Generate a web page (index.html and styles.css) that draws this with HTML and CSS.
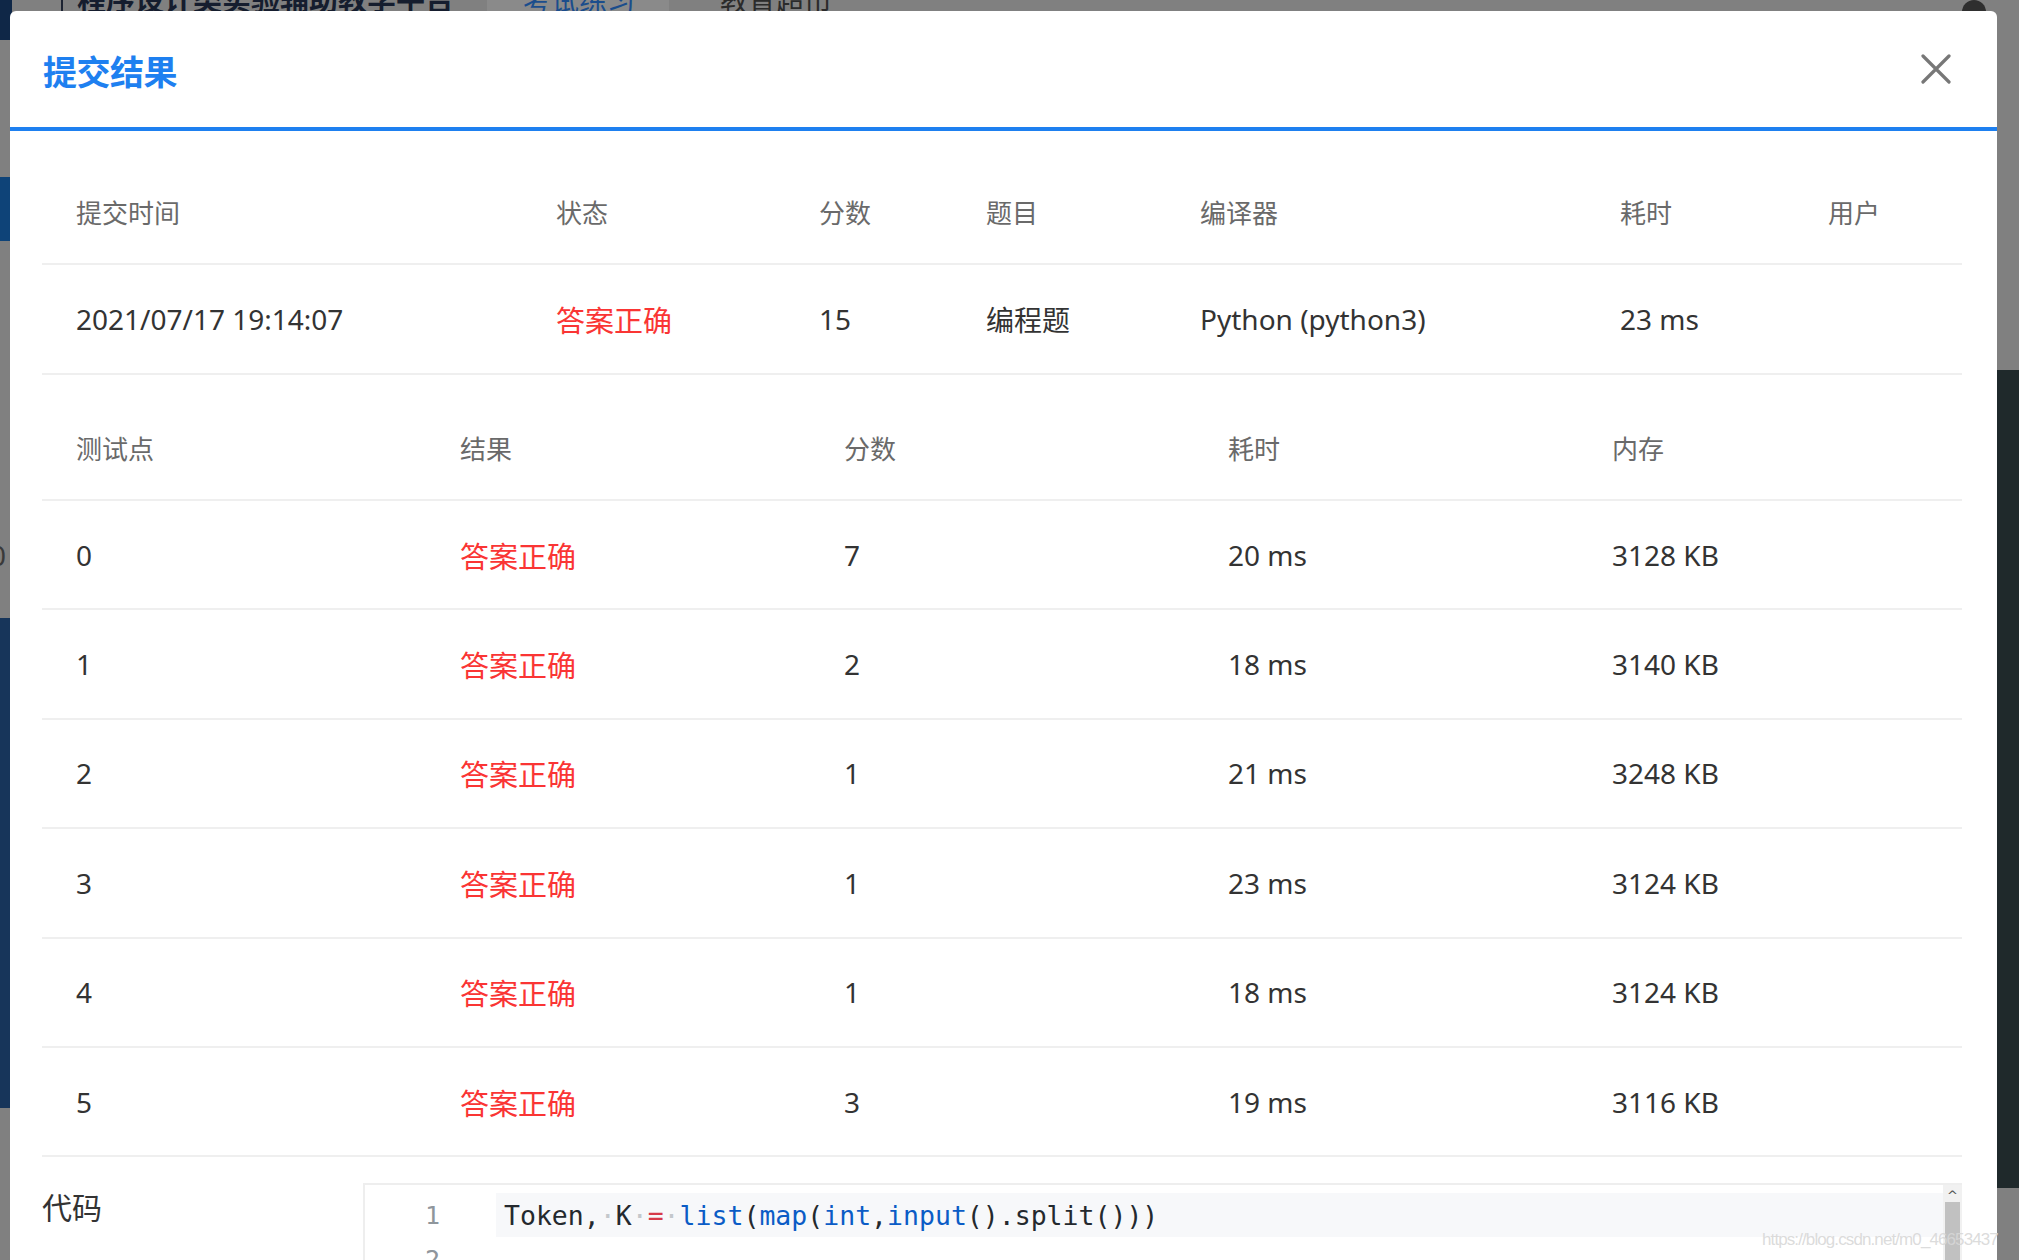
FILE: index.html
```html
<!DOCTYPE html>
<html lang="zh-CN">
<head>
<meta charset="utf-8">
<title>提交结果</title>
<link rel="stylesheet" href="styles.css">
</head>
<body>
<div class="backdrop">
  <div class="bg-topbar">
    <div class="bg-logo"></div>
    <div class="bg-sep"></div>
    <div class="bg-title">程序设计类实验辅助教学平台</div>
    <div class="bg-tab bg-tab-active">考试练习</div>
    <div class="bg-tab">教育超市</div>
    <div class="bg-avatar"></div>
  </div>
  <div class="bg-left-blue"></div>
  <div class="bg-left-char">0</div>
  <div class="bg-left-dark"></div>
  <div class="bg-right-dark"></div>
  <div class="watermark">https://blog.csdn.net/m0_46653437</div>
</div>

<div class="modal">
  <div class="modal-header">
    <h2 class="modal-title">提交结果</h2>
    <button class="close-btn" aria-label="关闭">
      <svg width="30" height="30" viewBox="0 0 30 30"><path d="M2 2 L28 28 M28 2 L2 28" stroke="#777" stroke-width="3.2" stroke-linecap="round" fill="none"/></svg>
    </button>
  </div>
  <div class="modal-body">
    <div class="table summary">
      <div class="row head">
        <div>提交时间</div><div>状态</div><div>分数</div><div>题目</div><div>编译器</div><div>耗时</div><div>用户</div>
      </div>
      <div class="row data">
        <div>2021/07/17 19:14:07</div><div class="ok">答案正确</div><div>15</div><div>编程题</div><div>Python (python3)</div><div>23 ms</div><div></div>
      </div>
    </div>

    <div class="table cases">
      <div class="row head">
        <div>测试点</div><div>结果</div><div>分数</div><div>耗时</div><div>内存</div>
      </div>
      <div class="row data"><div>0</div><div class="ok">答案正确</div><div>7</div><div>20 ms</div><div>3128 KB</div></div>
      <div class="row data"><div>1</div><div class="ok">答案正确</div><div>2</div><div>18 ms</div><div>3140 KB</div></div>
      <div class="row data"><div>2</div><div class="ok">答案正确</div><div>1</div><div>21 ms</div><div>3248 KB</div></div>
      <div class="row data"><div>3</div><div class="ok">答案正确</div><div>1</div><div>23 ms</div><div>3124 KB</div></div>
      <div class="row data"><div>4</div><div class="ok">答案正确</div><div>1</div><div>18 ms</div><div>3124 KB</div></div>
      <div class="row data"><div>5</div><div class="ok">答案正确</div><div>3</div><div>19 ms</div><div>3116 KB</div></div>
    </div>

    <div class="code-section">
      <div class="code-label">代码</div>
      <div class="code-box">
        <div class="code-lines">
          <div class="code-line active">
            <div class="gutter">1</div>
            <div class="code-text"><span class="id">Token,</span><span class="ws">·</span><span class="id">K</span><span class="ws">·</span><span class="op">=</span><span class="ws">·</span><span class="fn">list</span>(<span class="fn">map</span>(<span class="fn">int</span>,<span class="fn">input</span>().split()))</div>
          </div>
          <div class="code-line">
            <div class="gutter">2</div>
            <div class="code-text"></div>
          </div>
        </div>
        <div class="scrollbar">
          <div class="scroll-arrow">^</div>
          <div class="scroll-thumb"></div>
        </div>
      </div>
    </div>
  </div>
</div>
</body>
</html>
```

FILE: styles.css
```css
html, body {
  margin: 0;
  padding: 0;
  width: 2019px;
  height: 1260px;
  overflow: hidden;
}
body {
  position: relative;
  background: #808080;
  font-family: "Noto Sans", "Noto Sans CJK SC", sans-serif;
  color: #333;
}

/* dimmed page behind the dialog */
.backdrop {
  position: absolute;
  inset: 0;
  background: #808080;
}
.bg-topbar {
  position: absolute;
  left: 0;
  top: 0;
  width: 2019px;
  height: 40px;
}
.bg-logo {
  position: absolute;
  left: 0;
  top: 0;
  width: 12px;
  height: 40px;
  background: #0f2747;
}
.bg-sep {
  position: absolute;
  left: 61px;
  top: 0;
  width: 2px;
  height: 12px;
  background: #1c2332;
}
.bg-title {
  position: absolute;
  left: 77px;
  top: -16px;
  font-size: 29px;
  line-height: 29px;
  font-weight: 700;
  color: #151d2e;
  font-family: "Noto Sans CJK SC", sans-serif;
}
.bg-tab {
  position: absolute;
  top: -14px;
  left: 720px;
  font-size: 28px;
  line-height: 28px;
  color: #2b2b2b;
  font-family: "Noto Sans CJK SC", sans-serif;
}
.bg-tab-active {
  left: 487px;
  width: 182px;
  height: 26px;
  padding-left: 36px;
  box-sizing: border-box;
  background: #8a8a8a;
  color: #1b4d8c;
}
.bg-avatar {
  position: absolute;
  left: 1962px;
  top: 0;
  width: 24px;
  height: 26px;
  border-radius: 12px;
  background: #2f2f2f;
}
.bg-left-blue {
  position: absolute;
  left: 0;
  top: 177px;
  width: 12px;
  height: 64px;
  background: #0e4378;
}
.bg-left-char {
  position: absolute;
  left: -10px;
  top: 536px;
  font-size: 28px;
  color: #3a3a3a;
}
.bg-left-dark {
  position: absolute;
  left: 0;
  top: 618px;
  width: 12px;
  height: 490px;
  background: #17355a;
}
.bg-right-dark {
  position: absolute;
  left: 1990px;
  top: 370px;
  width: 29px;
  height: 818px;
  background: #1f292b;
}
.watermark {
  position: absolute;
  left: 1762px;
  top: 1230px;
  z-index: 5;
  font-family: "Liberation Sans", sans-serif;
  font-size: 17px;
  letter-spacing: -0.9px;
  color: rgba(215, 215, 215, 0.9);
}

/* dialog */
.modal {
  position: absolute;
  left: 10px;
  top: 11px;
  width: 1987px;
  height: 1300px;
  background: #fff;
  border-radius: 6px 6px 0 0;
  z-index: 2;
}
.modal-header {
  height: 116px;
  border-bottom: 4px solid #1e80f0;
  display: flex;
  align-items: center;
  justify-content: space-between;
  padding: 0 46px 0 33px;
}
.modal-title {
  margin: 0;
  padding-top: 3px;
  font-family: "Noto Sans CJK SC", sans-serif;
  font-size: 34px;
  font-weight: 700;
  color: #1e80f0;
  letter-spacing: -0.5px;
}
.close-btn {
  border: 0;
  padding: 0;
  background: none;
  width: 30px;
  height: 30px;
  display: flex;
}

.modal-body {
  padding: 0 35px 0 32px;
}

.table .row {
  display: grid;
  align-items: center;
  border-bottom: 2px solid #efefef;
}
.table .row > div {
  padding-left: 34px;
  white-space: nowrap;
}
.table .head {
  height: 100px;
  box-sizing: border-box;
  padding-bottom: 5px;
  font-size: 26px;
  color: #6a6a6a;
  font-family: "Noto Sans CJK SC", sans-serif;
}
.table .data {
  height: 108px;
  font-size: 28px;
  color: #333;
}
.summary {
  margin-top: 34px;
}
.summary .row {
  grid-template-columns: 480px 263px 167px 214px 420px 208px 168px;
}
.cases {
  margin-top: 26px;
}
.cases .row {
  grid-template-columns: repeat(5, 384px);
}
.cases .data {
  height: 107.4px;
}
.ok {
  color: #fa3534;
  font-family: "Noto Sans CJK SC", sans-serif;
  font-size: 29px;
}

/* code */
.code-section {
  margin-top: 26px;
  display: flex;
}
.code-label {
  width: 321px;
  flex: none;
  font-family: "Noto Sans CJK SC", sans-serif;
  font-size: 30px;
  line-height: 46px;
  color: #333;
}
.code-box {
  flex: 1;
  height: 200px;
  border-top: 2px solid #eeeeee;
  border-left: 2px solid #eeeeee;
  display: flex;
}
.code-lines {
  flex: 1;
  padding-top: 8px;
}
.code-line {
  display: flex;
  height: 44px;
  align-items: center;
}
.gutter {
  width: 131px;
  flex: none;
  box-sizing: border-box;
  padding-right: 56px;
  font-family: "DejaVu Sans Mono", monospace;
  font-size: 25px;
  color: #8f969c;
  background: #fff;
  align-self: stretch;
  display: flex;
  align-items: center;
  justify-content: flex-end;
}
.code-text {
  flex: 1;
  align-self: stretch;
  display: flex;
  align-items: center;
  padding-left: 8px;
  font-family: "DejaVu Sans Mono", monospace;
  font-size: 26.5px;
  color: #24292e;
  white-space: pre;
}
.active .code-text {
  background: #f7f8fa;
}
.ws { color: #c4c8cc; }
.op { color: #d73a49; }
.fn { color: #0b5cc6; }
.id { color: #24292e; }

.scrollbar {
  width: 19px;
  flex: none;
  background: #f1f1f1;
  display: flex;
  flex-direction: column;
}
.scroll-arrow {
  height: 17px;
  font-family: "DejaVu Sans", sans-serif;
  font-size: 13px;
  line-height: 22px;
  text-align: center;
  color: #505050;
}
.scroll-thumb {
  flex: 1;
  margin: 0 2px;
  background: #c1c1c1;
}
```
